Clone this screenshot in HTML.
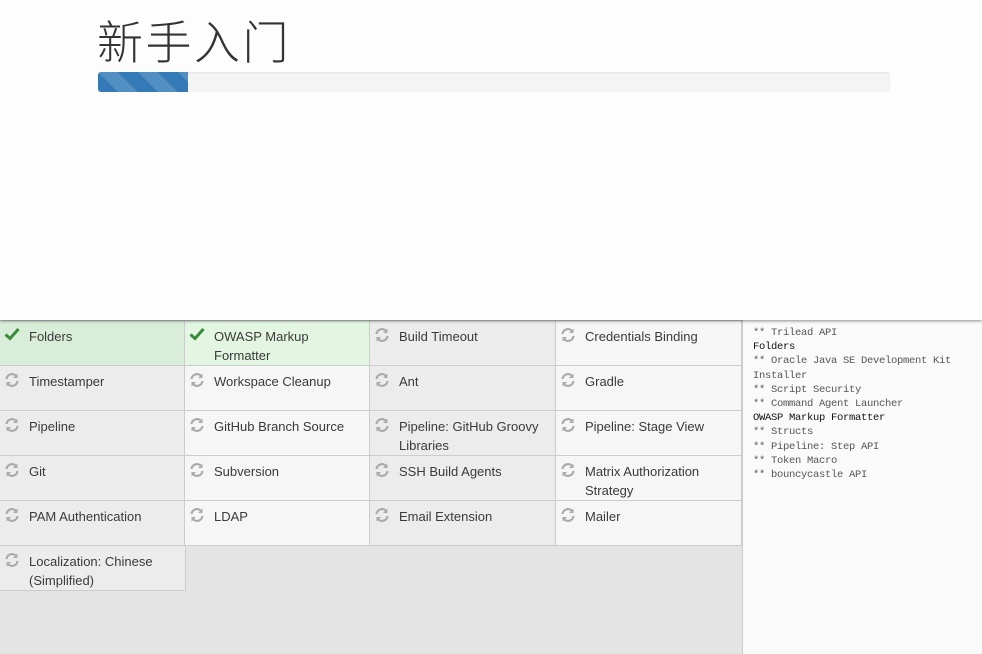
<!DOCTYPE html>
<html><head><meta charset="utf-8"><style>
*{margin:0;padding:0;box-sizing:border-box}
body{width:982px;height:654px;overflow:hidden;background:#e4e4e4;font-family:"Liberation Sans","Noto Sans CJK SC",sans-serif;position:relative}
.top{position:absolute;left:0;top:0;width:982px;height:320px;background:#fdfdfd;box-shadow:0 1px 3px rgba(0,0,0,.45);z-index:2}
h1{position:absolute;left:97px;top:12px;font-size:46px;font-weight:300;color:#333;font-family:"Noto Sans CJK SC",sans-serif;line-height:56px;letter-spacing:2.5px}
.bar{position:absolute;left:98px;top:72px;width:792px;height:20px;background:#f5f5f5;border-radius:3px;box-shadow:inset 0 1px 2px rgba(0,0,0,.08)}
.fill{width:90px;height:20px;border-radius:3px 0 0 3px;background-color:#337ab7;background-image:linear-gradient(45deg,rgba(255,255,255,.15) 25%,transparent 25%,transparent 50%,rgba(255,255,255,.15) 50%,rgba(255,255,255,.15) 75%,transparent 75%,transparent);background-size:40px 40px}
.cell{position:absolute;width:187px;height:46px;border:1px solid #ccc;font-size:13px;color:#3a3a3a;line-height:19px;padding:6px 6px 0 29px}
.c1,.c3{background:#ececec}.c2,.c4{background:#f6f6f6}
.ok1{background:#d9eed9}.ok2{background:#e2f6e2}
.ic{position:absolute;left:4px;top:6px}
.side{position:absolute;left:742px;top:320px;width:240px;height:334px;background:#fafafa;border-left:1px solid #ccc;font-family:"Liberation Mono",monospace;font-size:10.5px;line-height:14.2px;color:#555;padding:6px 0 0 10px;letter-spacing:-0.3px}
.side b{color:#111;font-weight:normal}
</style></head><body>
<div class="top"><h1>新手入门</h1><div class="bar"><div class="fill"></div></div></div>
<div id="grid"></div>
<div class="side">** Trilead API<br><b>Folders</b><br>** Oracle Java SE Development Kit<br>Installer<br>** Script Security<br>** Command Agent Launcher<br><b>OWASP Markup Formatter</b><br>** Structs<br>** Pipeline: Step API<br>** Token Macro<br>** bouncycastle API</div>
<script>
var items=[["Folders","OWASP Markup Formatter","Build Timeout","Credentials Binding"],["Timestamper","Workspace Cleanup","Ant","Gradle"],["Pipeline","GitHub Branch Source","Pipeline: GitHub Groovy Libraries","Pipeline: Stage View"],["Git","Subversion","SSH Build Agents","Matrix Authorization Strategy"],["PAM Authentication","LDAP","Email Extension","Mailer"],["Localization: Chinese (Simplified)"]];
var xs=[-1,184,369,555];
var check='<svg class="ic" width="16" height="14" viewBox="0 0 16 14"><path d="M1.5 7.5 L6 11.5 L14.5 2" stroke="#3c8a3c" stroke-width="3" fill="none"/></svg>';
var ref='<svg class="ic" width="16" height="16" viewBox="0 0 16 16"><path d="M2.5 7 A5.5 5.5 0 0 1 12.5 4.5" stroke="#aaa" stroke-width="2.2" fill="none"/><path d="M13.5 1.5 L13.5 6 L9 6 Z" fill="#aaa"/><path d="M13.5 9 A5.5 5.5 0 0 1 3.5 11.5" stroke="#aaa" stroke-width="2.2" fill="none"/><path d="M2.5 14.5 L2.5 10 L7 10 Z" fill="#aaa"/></svg>';
var h='';
items.forEach(function(r,i){r.forEach(function(t,j){var cls='c'+(j+1);if(i==0&&j<2)cls='ok'+(j+1);
h+='<div class="cell '+cls+'" style="left:'+xs[j]+'px;top:'+(320+i*45)+'px">'+((i==0&&j<2)?check:ref)+t+'</div>';});});
document.getElementById('grid').innerHTML=h;
</script>
</body></html>
